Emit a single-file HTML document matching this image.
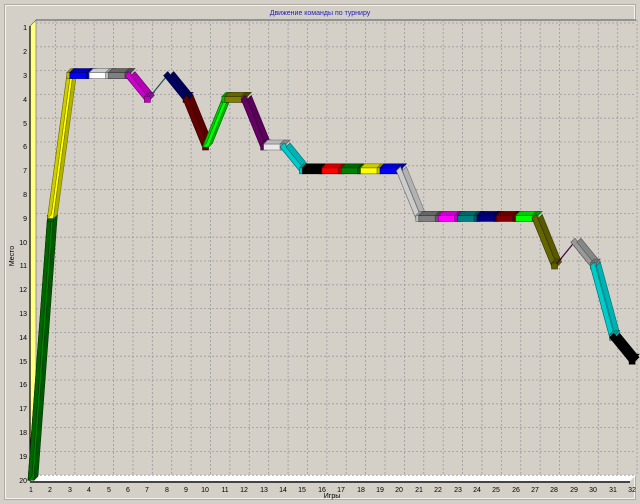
<!DOCTYPE html>
<html><head><meta charset="utf-8"><style>
html,body{margin:0;padding:0;background:#d4d0c8;}
body{width:640px;height:504px;position:relative;overflow:hidden;font-family:"Liberation Sans",sans-serif;}
.t{position:absolute;font-size:7px;color:#000;}
</style></head><body>
<svg id="s" width="640" height="504" style="position:absolute;left:0;top:0">
<rect x="4.5" y="4.5" width="631" height="495" fill="none" stroke="#b0aca4"/>
<rect x="5.5" y="5.5" width="629" height="493" fill="none" stroke="#f4f2ee"/>
<polygon points="36,20 636,20 636,475 36,475" fill="#d4d0c8"/>
<polygon points="30,26 36,20 36,475 30,481" fill="#ffff80" stroke="#666" stroke-width="0.6"/>
<polygon points="30,481 36,475 636,475 630,481" fill="#ffffff"/>
<line x1="30" y1="482" x2="630" y2="482" stroke="#444" stroke-width="2"/>
<line x1="36" y1="20" x2="636" y2="20" stroke="#555" stroke-width="1"/>
<line x1="30" y1="26" x2="30" y2="481" stroke="#000" stroke-width="1.2"/>
<g id="grid"></g><g id="bars"></g>
<text x="320" y="15" font-size="7" fill="#2020c0" text-anchor="middle" font-family="Liberation Sans">Движение команды по турниру</text>
<text x="332" y="498" font-size="7" text-anchor="middle" font-family="Liberation Sans">Игры</text>
<text transform="translate(14,256) rotate(-90)" font-size="7" text-anchor="middle" font-family="Liberation Sans">Место</text>
<g font-size="7" font-family="Liberation Sans" text-anchor="end">
<text x="27" y="30">1</text><text x="27" y="54">2</text><text x="27" y="78">3</text><text x="27" y="102">4</text><text x="27" y="126">5</text><text x="27" y="149">6</text><text x="27" y="173">7</text><text x="27" y="197">8</text><text x="27" y="221">9</text><text x="27" y="245">10</text><text x="27" y="268">11</text><text x="27" y="292">12</text><text x="27" y="316">13</text><text x="27" y="340">14</text><text x="27" y="364">15</text><text x="27" y="387">16</text><text x="27" y="411">17</text><text x="27" y="435">18</text><text x="27" y="459">19</text><text x="27" y="483">20</text>
</g>
<g font-size="7" font-family="Liberation Sans" text-anchor="middle">
<text x="31" y="492">1</text><text x="50" y="492">2</text><text x="70" y="492">3</text><text x="89" y="492">4</text><text x="109" y="492">5</text><text x="128" y="492">6</text><text x="147" y="492">7</text><text x="167" y="492">8</text><text x="186" y="492">9</text><text x="205" y="492">10</text><text x="225" y="492">11</text><text x="244" y="492">12</text><text x="264" y="492">13</text><text x="283" y="492">14</text><text x="302" y="492">15</text><text x="322" y="492">16</text><text x="341" y="492">17</text><text x="361" y="492">18</text><text x="380" y="492">19</text><text x="399" y="492">20</text><text x="419" y="492">21</text><text x="438" y="492">22</text><text x="458" y="492">23</text><text x="477" y="492">24</text><text x="496" y="492">25</text><text x="516" y="492">26</text><text x="535" y="492">27</text><text x="554" y="492">28</text><text x="574" y="492">29</text><text x="593" y="492">30</text><text x="613" y="492">31</text><text x="632" y="492">32</text>
</g>
</svg>
<script>
var NS="http://www.w3.org/2000/svg";
function X(g){return 31+(g-1)*19.39;}
function Y(r){return 28+(r-1)*23.8;}
var grid=document.getElementById('grid'),bars=document.getElementById('bars');
function el(p,t,a){var e=document.createElementNS(NS,t);for(var k in a)e.setAttribute(k,a[k]);p.appendChild(e);return e;}
for(var g=2;g<=32;g++){var x=X(g)+5;el(grid,'line',{x1:x,y1:20,x2:x,y2:475,stroke:'#999','stroke-dasharray':'2,2','stroke-width':0.8});}
for(var r=1;r<=20;r++){var y=Y(r)-5;el(grid,'line',{x1:36,y1:y,x2:636,y2:y,stroke:'#999','stroke-dasharray':'2,2','stroke-width':0.8});}
var d=[20,9,3,3,3,3,4,3,4,6,4,4,6,6,7,7,7,7,7,7,9,9,9,9,9,9,9,11,10,11,14,15];
var c=['#008000','#ffff00','#0000ff','#ffffff','#808080','#ff00ff','thin','#000080','#800000','#00ff00','#808000','#800080','#e8e8e8','#00ffff','#000000','#ff0000','#008000','#ffff00','#0000ff','#ffffff','#808080','#ff00ff','#008080','#000080','#800000','#00ff00','#808000','thin2','#c0c0c0','#00ffff','#000000'];
function dark(h,f){if(h.length<7)return h;var n=parseInt(h.slice(1),16);var r=(n>>16)*f|0,g=((n>>8)&255)*f|0,b=(n&255)*f|0;return 'rgb('+r+','+g+','+b+')';}
for(var i=0;i<31;i++){
 var x1=X(i+1),y1=Y(d[i]),x2=X(i+2),y2=Y(d[i+1]),col=c[i];
 if(col=='thin'||col=='thin2'){el(bars,'line',{x1:x1+2,y1:y1-2,x2:x2+2,y2:y2-2,stroke:col=='thin'?'#205050':'#400040','stroke-width':1.2});continue;}
 var dy=Math.abs(y2-y1),dx=x2-x1;
 var ox,oy;
 if(dy>dx){ox=3;oy=0;}else{ox=0;oy=3;}
 // front face
 el(bars,'polygon',{points:[x1-ox,y1-oy,x2-ox,y2-oy,x2+ox,y2+oy,x1+ox,y1+oy].join(' '),fill:col,stroke:dark(col,0.45),'stroke-width':0.6});
 // top/side face
 el(bars,'polygon',{points:[x1-ox,y1-oy,x2-ox,y2-oy,x2-ox+4,y2-oy-4,x1-ox+4,y1-oy-4].join(' '),fill:dark(col,0.8),stroke:dark(col,0.45),'stroke-width':0.6});
 if(dy>dx){el(bars,'polygon',{points:[x1+ox,y1+oy,x2+ox,y2+oy,x2+ox+4,y2+oy-4,x1+ox+4,y1+oy-4].join(' '),fill:dark(col,0.7),stroke:dark(col,0.45),'stroke-width':0.6});}
 // end cap
 el(bars,'polygon',{points:[x2-3,y2-3,x2+3,y2-3,x2+7,y2-7,x2+1,y2-7].join(' '),fill:dark(col,0.6),stroke:dark(col,0.4),'stroke-width':0.6});
 el(bars,'rect',{x:x2-3,y:y2-3,width:6,height:6,fill:dark(col,0.75),stroke:dark(col,0.4),'stroke-width':0.6});
}
</script>
</body></html>
